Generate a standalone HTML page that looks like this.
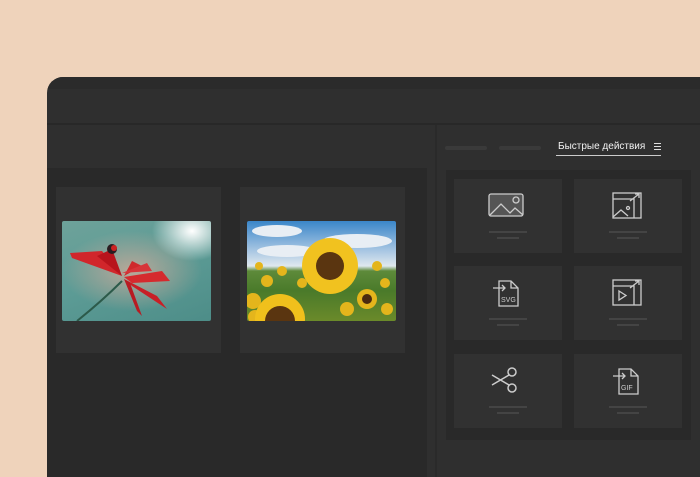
<!DOCTYPE html>
<html><head><meta charset="utf-8"><style>
*{margin:0;padding:0;box-sizing:border-box}
body{width:700px;height:440px;background:#efd3bb;position:relative;overflow:hidden;font-family:"Liberation Sans","DejaVu Sans",sans-serif}
.win{position:absolute;left:47px;top:77px;width:680px;height:400px;background:#2f2f2f;border-radius:16px 0 0 0;overflow:hidden}
.abs{position:absolute}
.card{position:absolute;background:#313131}
.rc{position:absolute;background:#313131;width:108px;height:74px}
.l1{position:absolute;height:2px;background:#444;width:38px;left:35px;top:52px}
.l2{position:absolute;height:2px;background:#444;width:22px;left:43px;top:58px}
.rc svg{position:absolute;left:34px;top:12px}
</style></head><body>
<div class="win">
 <div class="abs" style="left:0;top:0;width:680px;height:12px;background:#2b2b2b"></div>
 <div class="abs" style="left:0;top:46px;width:680px;height:2px;background:#282828"></div>
 <div class="abs" style="left:0;top:91px;width:380px;height:320px;background:#292929"></div>
 <div class="abs" style="left:388px;top:48px;width:2px;height:360px;background:#2a2a2a"></div>
 <div class="card" style="left:9px;top:110px;width:165px;height:166px"></div>
 <div class="card" style="left:193px;top:110px;width:165px;height:166px"></div>
 <div class="abs" style="left:15px;top:144px;width:149px;height:100px;border-radius:2px;overflow:hidden;background:radial-gradient(ellipse 40px 30px at 130px 10px,#fff,rgba(255,255,255,0) 100%),radial-gradient(ellipse 70px 40px at 70px 50px,#b9a899,rgba(0,0,0,0)),linear-gradient(160deg,#6ea29a,#5c9b95 50%,#4d8d88)">
  <svg width="149" height="100" viewBox="0 0 149 100">
   <path d="M15 100 Q40 80 60 60" stroke="#2c5a4a" stroke-width="2" fill="none"/>
   <path d="M60 55 L10 37 L8 32 L40 30 Z" fill="#d1262b"/>
   <path d="M60 55 L35 35 L50 28 Z" fill="#b8141c"/>
   <path d="M62 55 L70 40 L80 45 Z" fill="#cf2a2d"/>
   <path d="M62 56 L100 50 L108 60 L70 62 Z" fill="#d52a2e"/>
   <path d="M62 58 L95 75 L105 88 L70 65 Z" fill="#c81f26"/>
   <path d="M62 58 L75 90 L80 95 L68 62 Z" fill="#b81b22"/>
   <path d="M60 52 L85 42 L90 50 Z" fill="#d7353a"/>
   <circle cx="50" cy="28" r="5" fill="#2a1c20"/><circle cx="52" cy="27" r="3" fill="#c22"/>
  </svg>
 </div>
 <div class="abs" style="left:200px;top:144px;width:149px;height:100px;border-radius:2px;overflow:hidden;background:linear-gradient(#3a86c9,#a9c7e3 30%,#dfe8ee 45%,#5e8a3a 50%,#4a7a2a 70%,#6b8a2a)">
  <svg width="149" height="100" viewBox="0 0 149 100">
   <ellipse cx="30" cy="10" rx="25" ry="6" fill="#e8eef4"/><ellipse cx="110" cy="20" rx="35" ry="7" fill="#e8eef4"/><ellipse cx="40" cy="30" rx="30" ry="6" fill="#e8eef4"/>
   <g fill="#e4b51c"><circle cx="12" cy="45" r="4"/><circle cx="35" cy="50" r="5"/><circle cx="20" cy="60" r="6"/><circle cx="130" cy="45" r="5"/><circle cx="138" cy="62" r="5"/><circle cx="120" cy="78" r="10"/><circle cx="6" cy="80" r="8"/><circle cx="55" cy="62" r="5"/><circle cx="100" cy="88" r="7"/><circle cx="140" cy="88" r="6"/><circle cx="8" cy="96" r="7"/></g>
   <circle cx="83" cy="45" r="28" fill="#f1c21f"/><circle cx="83" cy="45" r="14" fill="#5a3510"/>
   <circle cx="33" cy="98" r="25" fill="#f0c01c"/><circle cx="33" cy="100" r="15" fill="#5a3510"/>
   <circle cx="120" cy="78" r="5" fill="#4a2a10"/>
  </svg>
 </div>
 <div class="abs" style="left:398px;top:69px;width:42px;height:4px;border-radius:2px;background:#3a3a3a"></div>
 <div class="abs" style="left:452px;top:69px;width:42px;height:4px;border-radius:2px;background:#3a3a3a"></div>
 <div class="abs" style="left:511px;top:64px;color:#f2f2f2;font-size:10px;white-space:nowrap">Быстрые действия</div>
 <div class="abs" style="left:607px;top:66px;width:7px;height:7px;border-top:1px solid #ddd;border-bottom:1px solid #ddd"><div style="margin-top:2px;height:1px;background:#ddd"></div></div>
 <div class="abs" style="left:509px;top:78px;width:105px;height:1px;background:#ccc"></div>
 <div class="abs" style="left:399px;top:93px;width:245px;height:270px;background:#292929"></div>
 <div class="rc" style="left:407px;top:102px"><svg width="40" height="30" viewBox="0 0 40 30" fill="none" stroke="#ccc" stroke-width="1.3"><rect x="1" y="3" width="34" height="22" rx="2" fill="#555"/><path d="M2 24 L13 13 L22 22 L27 17 L35 24" /><circle cx="28" cy="9" r="3"/></svg><div class="l1"></div><div class="l2"></div></div>
 <div class="rc" style="left:527px;top:102px"><svg width="40" height="30" viewBox="0 0 40 30" fill="none" stroke="#ccc" stroke-width="1.3"><rect x="5" y="2" width="28" height="25"/><path d="M5 8 H26 V27 M5 26 L13 19 L20 25 M22 10 L31 3 M27 3 H31 V7"/><circle cx="20" cy="17" r="1.5"/></svg><div class="l1"></div><div class="l2"></div></div>
 <div class="rc" style="left:407px;top:189px"><svg width="40" height="30" viewBox="0 0 40 30" fill="none" stroke="#ccc" stroke-width="1.3"><path d="M11 3 H23 L30 10 V28 H11 Z M23 3 V10 H30 M5 10 H17 M14 7 L17 10 L14 13"/><text x="13" y="24" font-size="7" fill="#ccc" stroke="none" font-family="Liberation Sans">SVG</text></svg><div class="l1"></div><div class="l2"></div></div>
 <div class="rc" style="left:527px;top:189px"><svg width="40" height="30" viewBox="0 0 40 30" fill="none" stroke="#ccc" stroke-width="1.3"><rect x="5" y="2" width="28" height="25"/><path d="M5 8 H26 V27 M22 10 L31 3 M27 3 H31 V7 M11 13 L18 17.5 L11 22 Z"/></svg><div class="l1"></div><div class="l2"></div></div>
 <div class="rc" style="left:407px;top:277px"><svg width="40" height="30" viewBox="0 0 40 30" fill="none" stroke="#ccc" stroke-width="1.5"><circle cx="24" cy="6" r="4"/><circle cx="24" cy="22" r="4"/><path d="M21 9 L4 19 M21 19 L4 9"/></svg><div class="l1"></div><div class="l2"></div></div>
 <div class="rc" style="left:527px;top:277px"><svg width="40" height="30" viewBox="0 0 40 30" fill="none" stroke="#ccc" stroke-width="1.3"><path d="M11 3 H23 L30 10 V28 H11 Z M23 3 V10 H30 M5 10 H17 M14 7 L17 10 L14 13"/><text x="13" y="24" font-size="7" fill="#ccc" stroke="none" font-family="Liberation Sans">GIF</text></svg><div class="l1"></div><div class="l2"></div></div>
</div>
</body></html>
